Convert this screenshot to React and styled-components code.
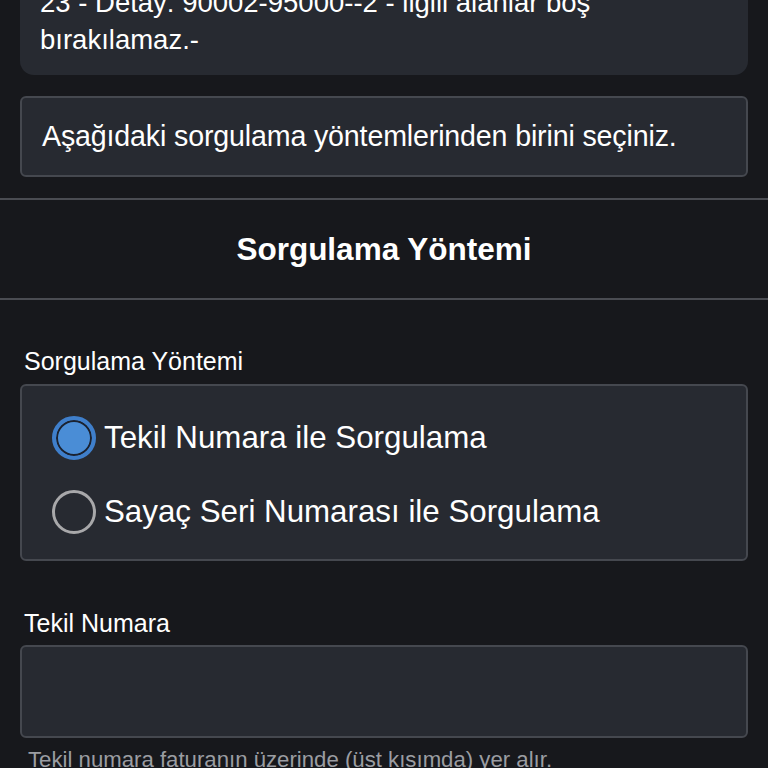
import React, { useState } from "react";
import styled, { createGlobalStyle } from "styled-components";

const GlobalStyle = createGlobalStyle`
  html, body {
    margin: 0;
    padding: 0;
    background: #17181c;
    font-family: "Liberation Sans", Arial, sans-serif;
    color: #ffffff;
  }
`;

const Page = styled.div`
  margin-top: -32px;
  display: flex;
  flex-direction: column;
`;

const Section = styled.div`
  padding: 0 20px;
  display: flex;
  flex-direction: column;
  gap: 21px;
`;

const ErrorCard = styled.div`
  background: #272a31;
  border-radius: 14px;
  padding: 16px 20px 17px;
  font-size: 27.5px;
  line-height: 37px;
`;

const InfoBox = styled.div`
  background: #272a31;
  border: 2px solid #45484f;
  border-radius: 6px;
  height: 81px;
  box-sizing: border-box;
  display: flex;
  align-items: center;
  padding: 0 20px;
  font-size: 28.6px;
  letter-spacing: -0.15px;
  white-space: nowrap;
`;

const HeaderBar = styled.div`
  margin-top: 21px;
  border-top: 2px solid #4a4c52;
  border-bottom: 2px solid #4a4c52;
  height: 98px;
  display: flex;
  align-items: center;
  justify-content: center;
  font-size: 31.5px;
  font-weight: bold;
`;

const Form = styled.div`
  padding: 47px 20px 0;
  display: flex;
  flex-direction: column;
`;

const FieldLabel = styled.div`
  font-size: 25px;
  padding-left: 4px;
  line-height: 28px;
  margin-bottom: ${(p) => p.$gap || 10}px;
`;

const RadioBox = styled.div`
  background: #272a31;
  border: 2px solid #45484f;
  border-radius: 6px;
  height: 177px;
  box-sizing: border-box;
  display: flex;
  flex-direction: column;
  justify-content: center;
  gap: 30px;
  padding: 4px 30px 0;
  margin-bottom: 48px;
`;

const RadioRow = styled.label`
  display: flex;
  align-items: center;
  gap: 8px;
  font-size: 31.3px;
  line-height: 44px;
  white-space: nowrap;
  cursor: pointer;
`;

const RadioDot = styled.span`
  width: 44px;
  height: 44px;
  box-sizing: border-box;
  border-radius: 50%;
  flex-shrink: 0;
  border: ${(p) => (p.$checked ? "4px solid #3f7fcb" : "3px solid #a8a8aa")};
  background: ${(p) => (p.$checked ? "#4a8dd6" : "transparent")};
  box-shadow: ${(p) => (p.$checked ? "inset 0 0 0 2px #1b2230" : "none")};
`;

const TextInput = styled.input`
  background: #272a31;
  border: 2px solid #45484f;
  border-radius: 6px;
  height: 93px;
  box-sizing: border-box;
  color: #fff;
  font-size: 28px;
  padding: 0 18px;
  outline: none;
  font-family: inherit;
`;

const Hint = styled.div`
  margin-top: 9px;
  padding-left: 8px;
  font-size: 22.2px;
  line-height: 25px;
  color: #9b9da2;
  white-space: nowrap;
`;

const methods = [
  { id: "tekil", label: "Tekil Numara ile Sorgulama" },
  { id: "sayac", label: "Sayaç Seri Numarası ile Sorgulama" },
];

export default function App() {
  const [method, setMethod] = useState("tekil");

  return (
    <>
      <GlobalStyle />
      <Page>
        <Section>
          <ErrorCard>
            23 - Detay: 90002-95000--2 - ilgili alanlar boş
            <br />
            bırakılamaz.-
          </ErrorCard>
          <InfoBox>Aşağıdaki sorgulama yöntemlerinden birini seçiniz.</InfoBox>
        </Section>

        <HeaderBar>Sorgulama Yöntemi</HeaderBar>

        <Form>
          <FieldLabel $gap={9}>Sorgulama Yöntemi</FieldLabel>
          <RadioBox>
            {methods.map((m) => (
              <RadioRow key={m.id} onClick={() => setMethod(m.id)}>
                <RadioDot $checked={method === m.id} />
                {m.label}
              </RadioRow>
            ))}
          </RadioBox>

          <FieldLabel $gap={8}>Tekil Numara</FieldLabel>
          <TextInput />
          <Hint>Tekil numara faturanın üzerinde (üst kısımda) yer alır.</Hint>
        </Form>
      </Page>
    </>
  );
}
